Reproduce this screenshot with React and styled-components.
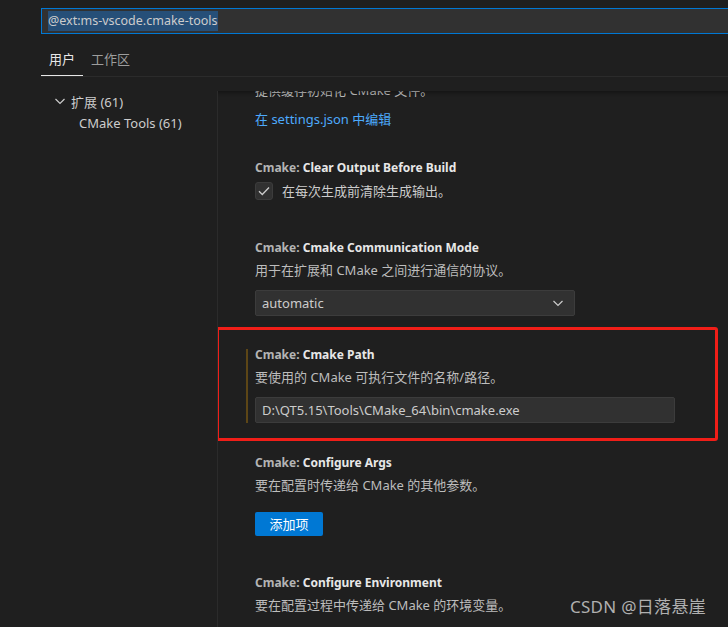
import React from "react";
import styled, { createGlobalStyle } from "styled-components";

const Global = createGlobalStyle`
  html, body { margin: 0; padding: 0; background: #1f1f1f; }
  body { font-family: "Noto Sans", "Noto Sans CJK SC", sans-serif; font-size: 13px; color: #cccccc; }
  * { box-sizing: border-box; }
`;

const Root = styled.div`
  position: relative;
  width: 728px;
  height: 627px;
  overflow: hidden;
  background: #1f1f1f;
  display: flex;
  flex-direction: column;
`;

const Header = styled.div`
  padding: 8px 0 0 41px;
`;

const SearchBox = styled.div`
  width: 720px;
  height: 26px;
  border: 1px solid #0078d4;
  background: #313131;
  display: flex;
  align-items: center;
  padding-left: 6px;
`;

const Selected = styled.span`
  background: #264f78;
  color: #cccccc;
  line-height: 20px;
  font-size: 12.5px;
  white-space: nowrap;
`;

const TabRow = styled.div`
  margin-top: 10px;
  display: flex;
  border-bottom: 1px solid #2b2b2b;
`;

const Tab = styled.div`
  height: 32px;
  line-height: 30px;
  padding: 0 8px;
  font-size: 13px;
  color: ${(p) => (p.$active ? "#e7e7e7" : "#9d9d9d")};
  box-shadow: ${(p) => (p.$active ? "inset 0 -1px 0 #e7e7e7" : "none")};
`;

const Body = styled.div`
  flex: 1;
  display: flex;
  padding-left: 41px;
  min-height: 0;
`;

const Tree = styled.div`
  width: 176px;
  flex-shrink: 0;
  padding-top: 13px;
`;

const TreeRow = styled.div`
  height: 22px;
  display: flex;
  align-items: center;
  padding-left: ${(p) => p.$indent}px;
  color: #cccccc;
  white-space: nowrap;
`;

const Chevron = styled.svg`
  width: 16px;
  height: 16px;
  margin-right: 3px;
  flex-shrink: 0;
`;

const Panel = styled.div`
  flex: 1;
  margin-top: 14px;
  border-left: 1px solid #2b2b2b;
  position: relative;
  overflow: hidden;
  &::before {
    content: "";
    position: absolute;
    left: 0;
    right: 0;
    top: 0;
    height: 6px;
    box-shadow: inset 0 6px 6px -6px rgba(0, 0, 0, 0.6);
    z-index: 2;
  }
`;

const Content = styled.div`
  padding-left: 37px;
  display: flex;
  flex-direction: column;
`;

const SettingItem = styled.div`
  position: relative;
  margin-top: ${(p) => p.$gap || 0}px;
  display: flex;
  flex-direction: column;
  align-items: flex-start;
`;

const Title = styled.div`
  font-weight: 700;
  font-size: 12px;
  line-height: 17px;
  height: 18px;
  color: #e7e7e7;
  white-space: nowrap;
`;

const Category = styled.span`
  color: #b4b4b4;
`;

const Desc = styled.div`
  margin-top: ${(p) => (p.$mt !== undefined ? p.$mt : 5)}px;
  line-height: 17px;
  height: 18px;
  color: #bdbdbd;
  white-space: nowrap;
`;

const Link = styled.div`
  margin-top: 11px;
  line-height: 17px;
  height: 18px;
  color: #4daafc;
`;

const CheckRow = styled.div`
  margin-top: 5px;
  display: flex;
  align-items: center;
  gap: 9px;
  line-height: 17px;
`;

const CheckBox = styled.div`
  width: 18px;
  height: 18px;
  border: 1px solid #3c3c3c;
  background: #313131;
  border-radius: 3px;
  display: flex;
  align-items: center;
  justify-content: center;
`;

const Select = styled.div`
  margin-top: 10px;
  width: 320px;
  height: 26px;
  background: #313131;
  border: 1px solid #3c3c3c;
  border-radius: 2px;
  display: flex;
  align-items: center;
  justify-content: space-between;
  padding: 0 5px 1px 6px;
  color: #cccccc;
`;

const Input = styled.div`
  margin-top: 10px;
  width: 420px;
  height: 26px;
  background: #313131;
  border: 1px solid #3c3c3c;
  border-radius: 2px;
  display: flex;
  align-items: center;
  padding: 0 0 1px 6px;
  color: #cccccc;
  white-space: nowrap;
`;

const Button = styled.div`
  margin-top: 17px;
  width: 68px;
  height: 24px;
  background: #0078d4;
  color: #ffffff;
  border-radius: 2px;
  display: flex;
  align-items: center;
  justify-content: center;
  padding-bottom: 1px;
`;

const Modified = styled.div`
  align-self: stretch;
  position: relative;
  display: flex;
  flex-direction: column;
  align-items: flex-start;
  &::before {
    content: "";
    position: absolute;
    left: -9px;
    top: 3px;
    bottom: 0;
    width: 2px;
    background: #5d4616;
  }
  &::after {
    content: "";
    position: absolute;
    left: -39px;
    top: -19px;
    right: 10px;
    bottom: -18px;
    border: 3px solid #f01e18;
    border-radius: 3px;
    pointer-events: none;
  }
`;

const Watermark = styled.div`
  position: absolute;
  right: 22px;
  bottom: 9px;
  font-size: 17px;
  line-height: 22px;
  color: #b0b0b0;
  font-family: "Noto Sans", "Noto Sans CJK SC", sans-serif;
  letter-spacing: 0.3px;
`;

const ChevronIcon = ({ color = "#cccccc" }) => (
  <Chevron viewBox="0 0 16 16">
    <path d="M3.5 6 L8 10.5 L12.5 6" fill="none" stroke={color} strokeWidth="1.2" />
  </Chevron>
);

export default function App() {
  return (
    <>
      <Global />
      <Root>
        <Header>
          <SearchBox>
            <Selected>@ext:ms-vscode.cmake-tools</Selected>
          </SearchBox>
          <TabRow>
            <Tab $active>用户</Tab>
            <Tab>工作区</Tab>
          </TabRow>
        </Header>
        <Body>
          <Tree>
            <TreeRow $indent={11}>
              <ChevronIcon />
              扩展 (61)
            </TreeRow>
            <TreeRow $indent={38}>CMake Tools (61)</TreeRow>
          </Tree>
          <Panel>
            <Content>
              <SettingItem>
                <Desc $mt={-9}>提供缓存初始化 CMake 文件。</Desc>
                <Link>在 settings.json 中编辑</Link>
              </SettingItem>

              <SettingItem $gap={30}>
                <Title>
                  <Category>Cmake: </Category>Clear Output Before Build
                </Title>
                <CheckRow>
                  <CheckBox>
                    <svg width="16" height="16" viewBox="0 0 16 16">
                      <path d="M3 8.2 L6.3 11.5 L13 4.5" fill="none" stroke="#cccccc" strokeWidth="1.3" />
                    </svg>
                  </CheckBox>
                  <span>在每次生成前清除生成输出。</span>
                </CheckRow>
              </SettingItem>

              <SettingItem $gap={39}>
                <Title>
                  <Category>Cmake: </Category>Cmake Communication Mode
                </Title>
                <Desc>用于在扩展和 CMake 之间进行通信的协议。</Desc>
                <Select>
                  <span>automatic</span>
                  <ChevronIcon />
                </Select>
              </SettingItem>

              <SettingItem $gap={30}>
                <Modified>
                  <Title>
                    <Category>Cmake: </Category>Cmake Path
                  </Title>
                  <Desc>要使用的 CMake 可执行文件的名称/路径。</Desc>
                  <Input>D:\QT5.15\Tools\CMake_64\bin\cmake.exe</Input>
                </Modified>
              </SettingItem>

              <SettingItem $gap={31}>
                <Title>
                  <Category>Cmake: </Category>Configure Args
                </Title>
                <Desc>要在配置时传递给 CMake 的其他参数。</Desc>
                <Button>添加项</Button>
              </SettingItem>

              <SettingItem $gap={38}>
                <Title>
                  <Category>Cmake: </Category>Configure Environment
                </Title>
                <Desc>要在配置过程中传递给 CMake 的环境变量。</Desc>
              </SettingItem>
            </Content>
          </Panel>
        </Body>
        <Watermark>CSDN @日落悬崖</Watermark>
      </Root>
    </>
  );
}
